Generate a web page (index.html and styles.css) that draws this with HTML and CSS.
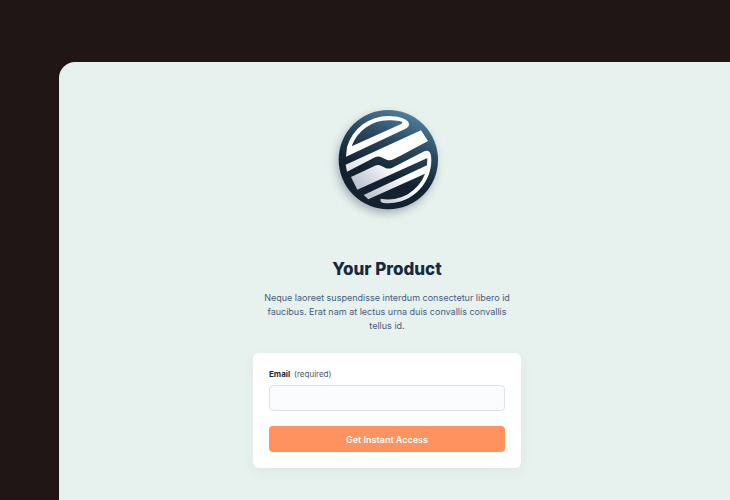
FILE: index.html
```html
<!DOCTYPE html>
<html lang="en">
<head>
    <meta charset="UTF-8">
    <meta name="viewport" content="width=device-width, initial-scale=1.0">
    <title>Your Product</title>
    <link rel="stylesheet" href="styles.css">
</head>
<body>
    <main class="panel">
        <div class="content">
            <svg class="logo" viewBox="30 38 312 312" aria-hidden="true">
                <defs>
                    <linearGradient id="disc" x1="0.75" y1="0" x2="0.4" y2="0.9">
                        <stop offset="0" stop-color="#5486a6"/>
                        <stop offset="0.4" stop-color="#28465c"/>
                        <stop offset="0.75" stop-color="#142230"/>
                    </linearGradient>
                    <linearGradient id="upper" gradientUnits="userSpaceOnUse" x1="62" y1="220" x2="150" y2="170">
                        <stop offset="0" stop-color="#dfe4e9"/>
                        <stop offset="1" stop-color="#ffffff"/>
                    </linearGradient>
                    <linearGradient id="lower" gradientUnits="userSpaceOnUse" x1="90" y1="285" x2="180" y2="190">
                        <stop offset="0" stop-color="#b4bdc8"/>
                        <stop offset="1" stop-color="#ffffff"/>
                    </linearGradient>
                </defs>
                <circle cx="190" cy="193" r="149" fill="url(#disc)"/>
                <!-- upper loop -->
                <path d="M63 184 L66 155 A129 129 0 0 1 190 62 C222 62 252 72 252 86 C252 94 248 97 240 101 Z M80 153 L230 85 C240 78 215 75 190 75 A117 117 0 0 0 80 153 Z" fill="#fff" fill-rule="evenodd"/>
                <!-- middle stripes -->
                <path d="M62 208 L288 105 L309 137 L225 182 L205 192 Q195 197 185 193 L172 187 Q160 181 150 186 L66 229 Z" fill="url(#upper)"/>
                <path d="M78 245 L150 211 Q160 207 168 211 L180 217 Q190 222 202 217 L298 168 C314 161 319 174 319 195 A130 130 0 0 1 175 323 Q164 321 167 310 A117 117 0 0 0 300 235 L130 312 L116 299 L306 210 L307 188 L97 283 Z" fill="url(#lower)"/>
            </svg>
            <h1 class="title">Your Product</h1>
            <p class="description">Neque laoreet suspendisse interdum consectetur libero id faucibus. Erat nam at lectus urna duis convallis convallis tellus id.</p>
            <form class="card">
                <label class="label" for="email">Email <span class="required">(required)</span></label>
                <input class="input" type="email" id="email" name="email" required>
                <button class="button" type="submit">Get Instant Access</button>
            </form>
        </div>
    </main>
</body>
</html>
```

FILE: styles.css
```css
* {
    box-sizing: border-box;
}
body {
    margin: 0;
    padding: 62px 0 0 59px;
    min-height: 100vh;
    display: flex;
    background: #211616;
    font-family: Inter, sans-serif;
    color: #172940;
}
.panel {
    flex: 1;
    padding: 46px 15px 32px 0;
    background: #e7f2ee;
    border-top-left-radius: 16px;
}
.content {
    max-width: 268px;
    margin: 0 auto;
    text-align: center;
}
.logo {
    display: block;
    width: 104px;
    height: 104px;
    margin: 0 auto 45px;
    overflow: visible;
    filter: drop-shadow(-2px 4px 4px rgba(40, 55, 85, 0.35));
}
.title {
    margin: 0 0 10px;
    font-size: 17px;
    line-height: 24px;
    font-weight: 800;
}
.description {
    margin: 0 0 20px;
    padding: 0 6px;
    font-size: 9px;
    line-height: 14px;
    color: #475b80;
}
.card {
    padding: 16px;
    background: #ffffff;
    border-radius: 6px;
    box-shadow: 0 4px 12px rgba(30, 60, 60, 0.05);
    text-align: left;
}
.label {
    display: block;
    margin-bottom: 5px;
    font-size: 8px;
    line-height: 11px;
    font-weight: 700;
}
.required {
    margin-left: 2px;
    font-weight: 400;
    color: #475b70;
}
.input {
    display: block;
    width: 100%;
    height: 26px;
    margin-bottom: 15px;
    padding: 0 8px;
    border: 1px solid #dfe2e9;
    border-radius: 4px;
    background: #fbfcfe;
    font: inherit;
    font-size: 9px;
}
.button {
    display: block;
    width: 100%;
    height: 26px;
    padding: 0;
    border: none;
    border-radius: 4px;
    background: #ff925e;
    color: #ffffff;
    font: inherit;
    font-size: 9px;
    font-weight: 600;
    cursor: pointer;
}
.button:hover {
    background: #f9834a;
}
```
